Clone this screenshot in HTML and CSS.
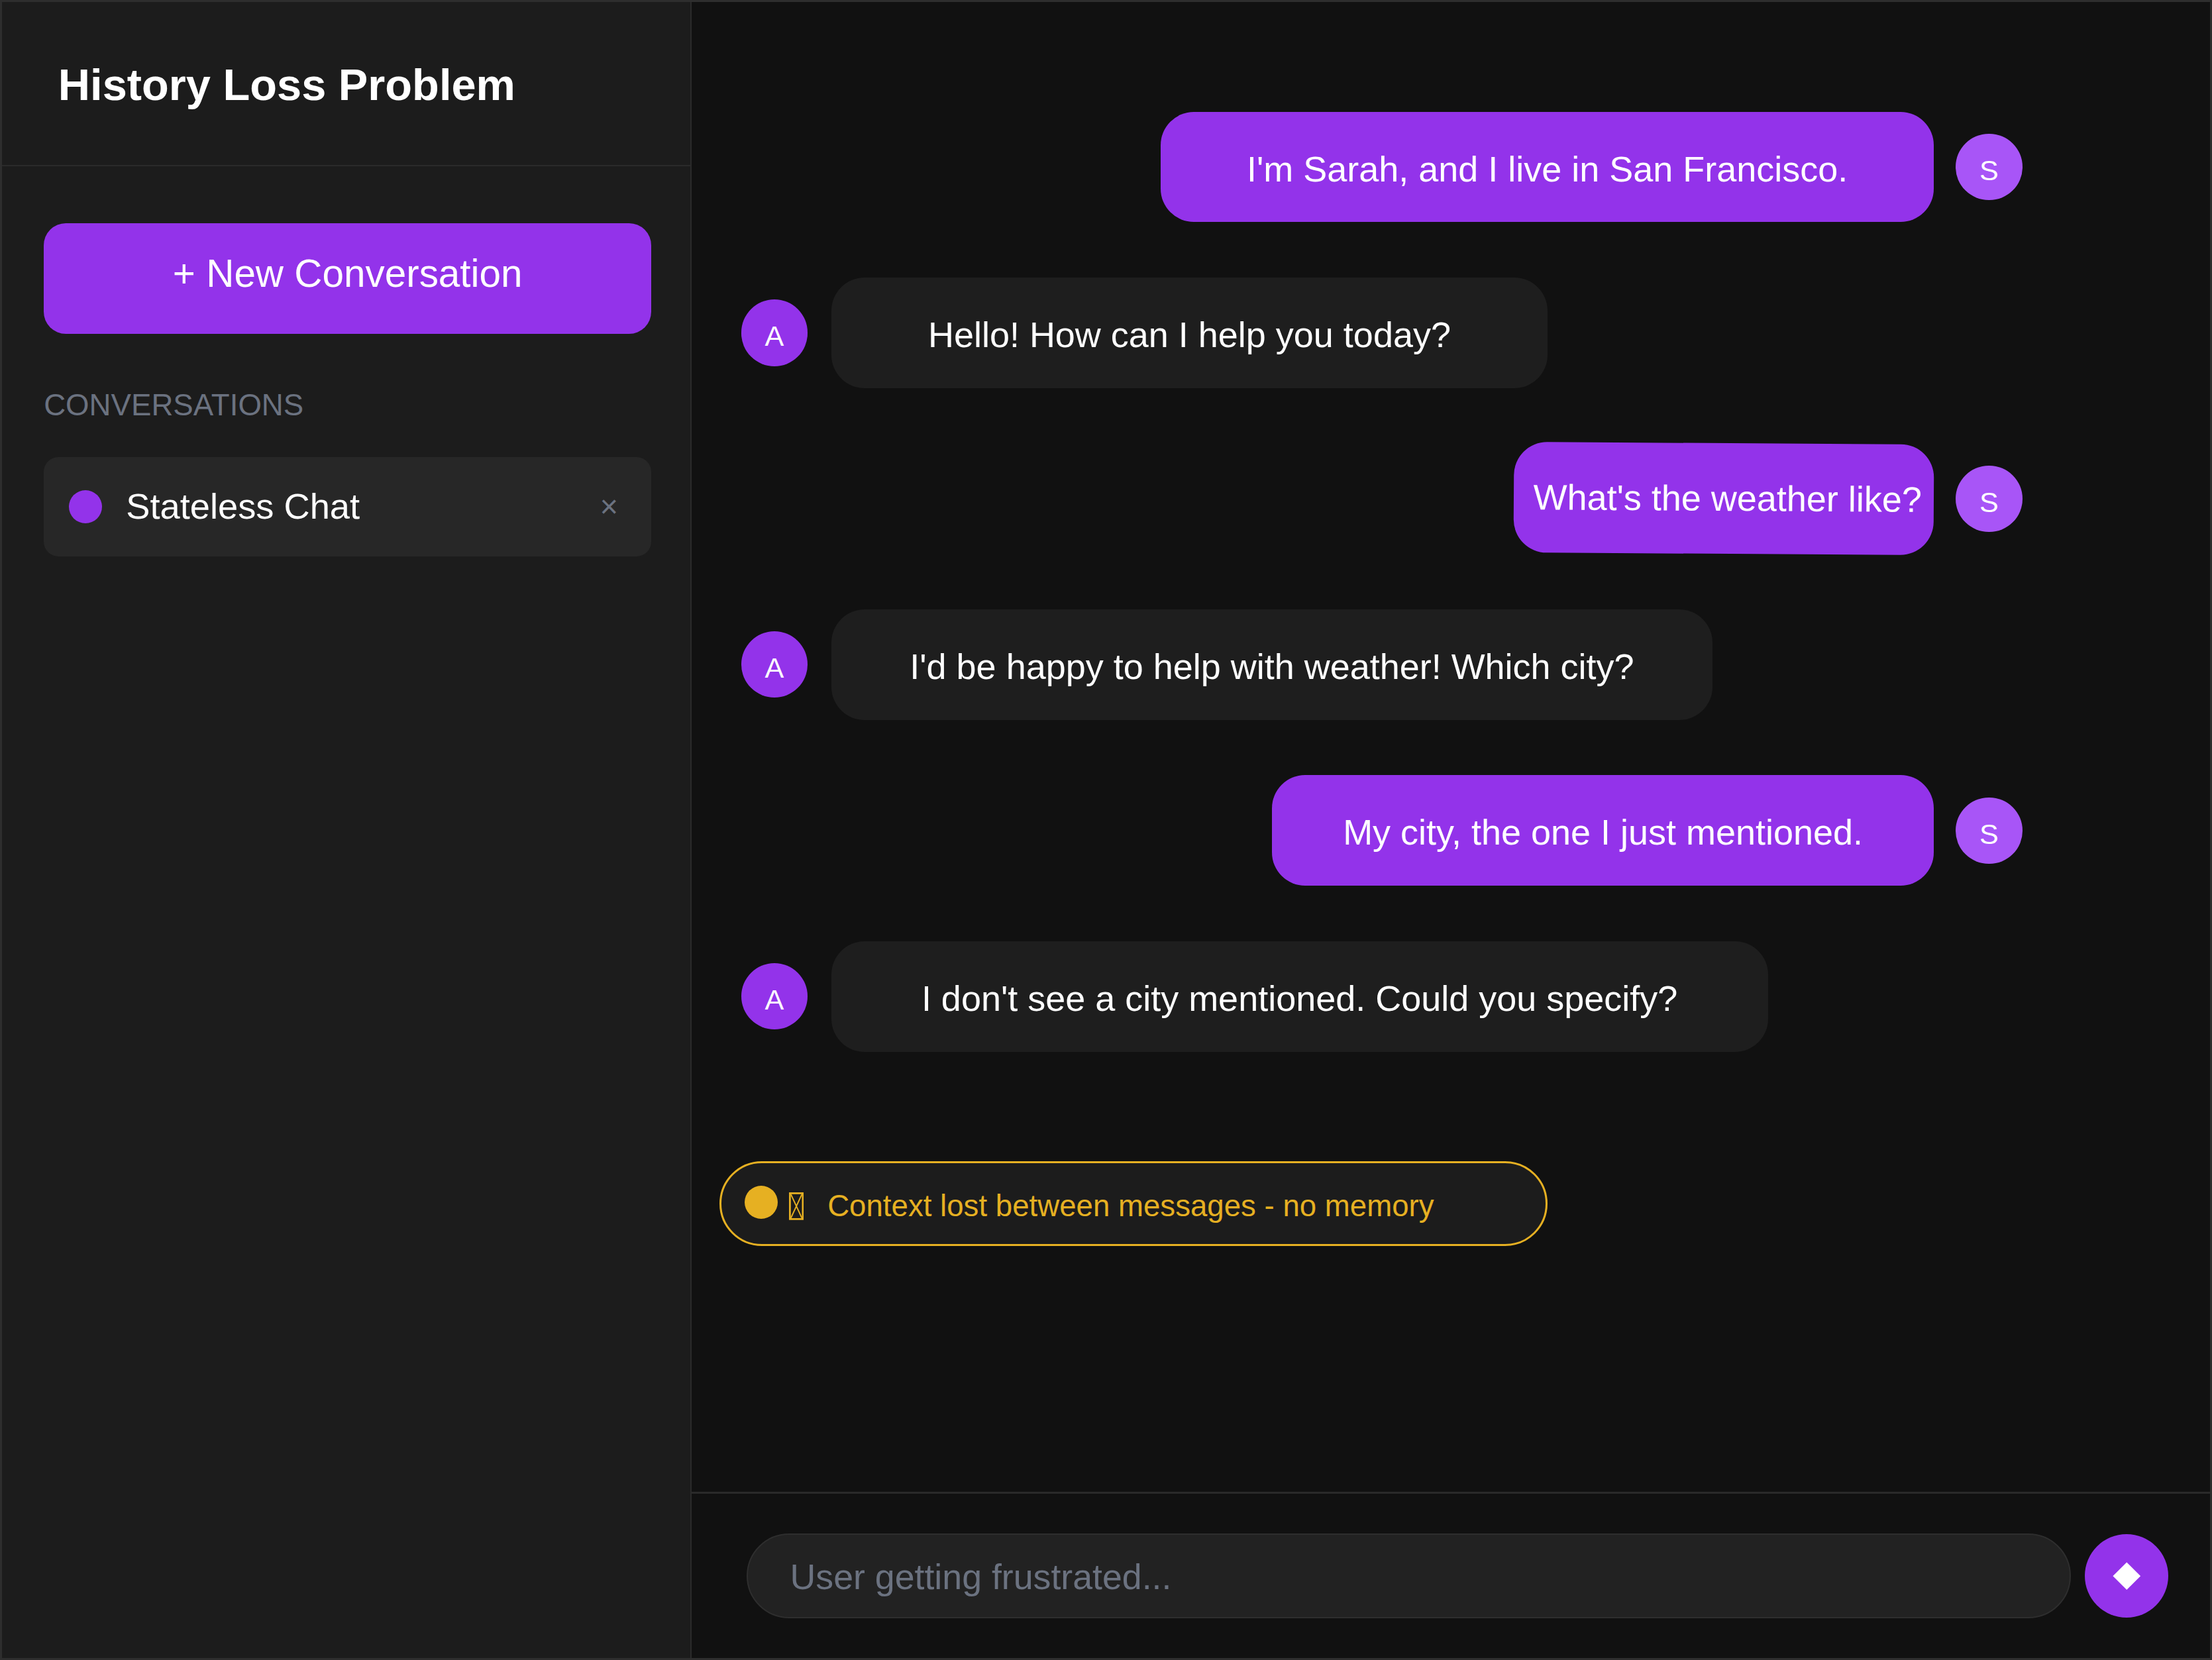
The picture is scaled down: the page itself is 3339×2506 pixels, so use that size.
FILE: index.html
```html
<!DOCTYPE html>
<html lang="en">
<head>
<meta charset="utf-8">
<title>History Loss Problem</title>
<link rel="stylesheet" href="styles.css">
</head>
<body>
<div class="app">
  <aside class="sidebar">
    <header class="sidebar-header">
      <h1 class="title">History Loss Problem</h1>
    </header>
    <div class="sidebar-body">
      <button class="new-btn">+ New Conversation</button>
      <div class="section-label">CONVERSATIONS</div>
      <div class="conv-item">
        <span class="conv-dot"></span>
        <span class="conv-name">Stateless Chat</span>
        <span class="conv-close">×</span>
      </div>
    </div>
  </aside>
  <main class="main">
    <div class="messages">
      <div class="msg msg-user">
        <div class="bubble bubble-user w-u1">I'm Sarah, and I live in San Francisco.</div>
        <div class="avatar avatar-user">S</div>
      </div>
      <div class="msg msg-asst">
        <div class="avatar avatar-asst">A</div>
        <div class="bubble bubble-asst w-a1">Hello! How can I help you today?</div>
      </div>
      <div class="msg msg-user">
        <div class="bubble bubble-user w-u2 tilted">What's the weather like?</div>
        <div class="avatar avatar-user">S</div>
      </div>
      <div class="msg msg-asst">
        <div class="avatar avatar-asst">A</div>
        <div class="bubble bubble-asst w-a2">I'd be happy to help with weather! Which city?</div>
      </div>
      <div class="msg msg-user">
        <div class="bubble bubble-user w-u3">My city, the one I just mentioned.</div>
        <div class="avatar avatar-user">S</div>
      </div>
      <div class="msg msg-asst">
        <div class="avatar avatar-asst">A</div>
        <div class="bubble bubble-asst w-a3">I don't see a city mentioned. Could you specify?</div>
      </div>
      <div class="warning">
        <span class="warn-dot"></span>
        <svg class="tofu" width="8" height="15" viewBox="0 0 8 15" aria-hidden="true">
          <rect x="0.5" y="0.5" width="7" height="14" fill="none" stroke="currentColor" stroke-width="1"/>
          <path d="M1 1 L7 14 M7 1 L1 14" stroke="currentColor" stroke-width="0.7" fill="none"/>
        </svg>
        <span class="warn-text">Context lost between messages - no memory</span>
      </div>
    </div>
    <div class="input-bar">
      <input class="chat-input" type="text" placeholder="User getting frustrated...">
      <button class="send-btn" aria-label="Send">
        <svg width="16" height="16" viewBox="0 0 16 16" aria-hidden="true">
          <polygon points="8,0.5 15.5,8 8,15.5 0.5,8" fill="#ffffff"/>
        </svg>
      </button>
    </div>
  </main>
</div>
</body>
</html>
```

FILE: styles.css
```css
html {
  zoom: 2.7825;
}

* {
  box-sizing: border-box;
}

body {
  margin: 0;
  background: #111111;
  font-family: "Liberation Sans", Arial, Helvetica, sans-serif;
  color: #ffffff;
}

.app {
  width: 1200px;
  height: 900.5px;
  border: 1.3px solid #2e2e2e;
  display: flex;
  overflow: hidden;
}

/* Sidebar */
.sidebar {
  width: 374px;
  flex: none;
  background: #1c1c1c;
  border-right: 1px solid #2a2a2a;
  display: flex;
  flex-direction: column;
}

.sidebar-header {
  height: 89px;
  border-bottom: 1px solid #2a2a2a;
  display: flex;
  align-items: center;
  padding-left: 30.5px;
  padding-top: 1.5px;
}

.title {
  margin: 0;
  font-size: 24px;
  font-weight: 700;
  color: #ffffff;
  line-height: 1.15;
}

.sidebar-body {
  padding: 31px 21px 0 22.7px;
  display: flex;
  flex-direction: column;
}

.new-btn {
  height: 60px;
  width: 100%;
  border: none;
  border-radius: 12px;
  background: #9333ea;
  color: #ffffff;
  font-family: "Liberation Sans", Arial, sans-serif;
  font-size: 21px;
  padding: 0 0 6px 0;
  cursor: pointer;
}

.section-label {
  margin-top: 29.5px;
  font-size: 16.4px;
  line-height: 19px;
  color: #6b7280;
}

.conv-item {
  margin-top: 18.5px;
  height: 53.7px;
  border-radius: 8px;
  background: #272727;
  display: flex;
  align-items: center;
  padding: 0 18px 0 13.6px;
}

.conv-dot {
  width: 18px;
  height: 18px;
  border-radius: 50%;
  background: #9333ea;
  flex: none;
}

.conv-name {
  margin-left: 13px;
  font-size: 19.5px;
  color: #ffffff;
  padding-bottom: 1px;
}

.conv-close {
  margin-left: auto;
  font-size: 17px;
  color: #6b7280;
  line-height: 1;
}

/* Main */
.main {
  flex: 1;
  display: flex;
  flex-direction: column;
  background: #111111;
}

.messages {
  flex: 1;
  padding: 59.5px 0 0 15.3px;
  display: flex;
  flex-direction: column;
  gap: 30px;
}

.msg {
  width: 695px;
  margin-left: 11.7px;
  height: 60px;
  display: flex;
  align-items: center;
  gap: 12px;
}

.msg-user {
  justify-content: flex-end;
}

.msg-asst {
  justify-content: flex-start;
}

.avatar {
  width: 36px;
  height: 36px;
  border-radius: 50%;
  flex: none;
  display: flex;
  align-items: center;
  justify-content: center;
  font-size: 15.5px;
  color: #ffffff;
  padding-top: 4px;
}

.avatar-user {
  background: #a855f7;
}

.avatar-asst {
  background: #9333ea;
}

.bubble {
  height: 60px;
  border-radius: 18px;
  display: flex;
  align-items: center;
  justify-content: center;
  white-space: nowrap;
  font-size: 19.4px;
  color: #ffffff;
  flex: none;
  padding-top: 2px;
}

.bubble-user {
  background: #9333ea;
}

.bubble-asst {
  background: #1e1e1e;
}

.w-u1 { width: 419.4px; }
.w-a1 { width: 388.8px; margin-left: 0.8px; }
.w-u2 { width: 228px; }
.w-a2 { width: 478.3px; margin-left: 0.8px; }
.w-u3 { width: 359px; }
.w-a3 { width: 508.2px; margin-left: 0.8px; }

.tilted {
  transform: rotate(0.35deg);
  padding-left: 4px;
  padding-top: 0;
}

.warning {
  margin-top: 29.4px;
  width: 449.2px;
  height: 46px;
  border: 1.2px solid #e6b022;
  border-radius: 23px;
  background: #1c1c1c;
  display: flex;
  align-items: center;
  padding-left: 12.5px;
  color: #e6b022;
}

.warn-dot {
  width: 18px;
  height: 18px;
  border-radius: 50%;
  background: #e6b022;
  flex: none;
  margin-bottom: 1px;
}

.tofu {
  margin-left: 6px;
  margin-top: 3px;
  flex: none;
  color: #e6b022;
}

.warn-text {
  margin-left: 13px;
  font-size: 16.4px;
  color: #e6b022;
  padding-top: 3px;
}

/* Input */
.input-bar {
  height: 90px;
  flex: none;
  border-top: 1.3px solid #2a2a2a;
  display: flex;
  align-items: center;
  padding: 0 22.6px 0 29.8px;
}

.chat-input {
  flex: 1;
  height: 46px;
  border-radius: 23px;
  border: 1px solid #2e2e2e;
  background: #222222;
  padding: 1px 23px 0 23px;
  font-family: "Liberation Sans", Arial, sans-serif;
  font-size: 19.3px;
  color: #ffffff;
  outline: none;
}

.chat-input::placeholder {
  color: #6b7280;
}

.send-btn {
  margin-left: 7.5px;
  width: 45.5px;
  height: 45.5px;
  border-radius: 50%;
  border: none;
  background: #9333ea;
  display: flex;
  align-items: center;
  justify-content: center;
  padding: 0;
  flex: none;
  cursor: pointer;
}
```
